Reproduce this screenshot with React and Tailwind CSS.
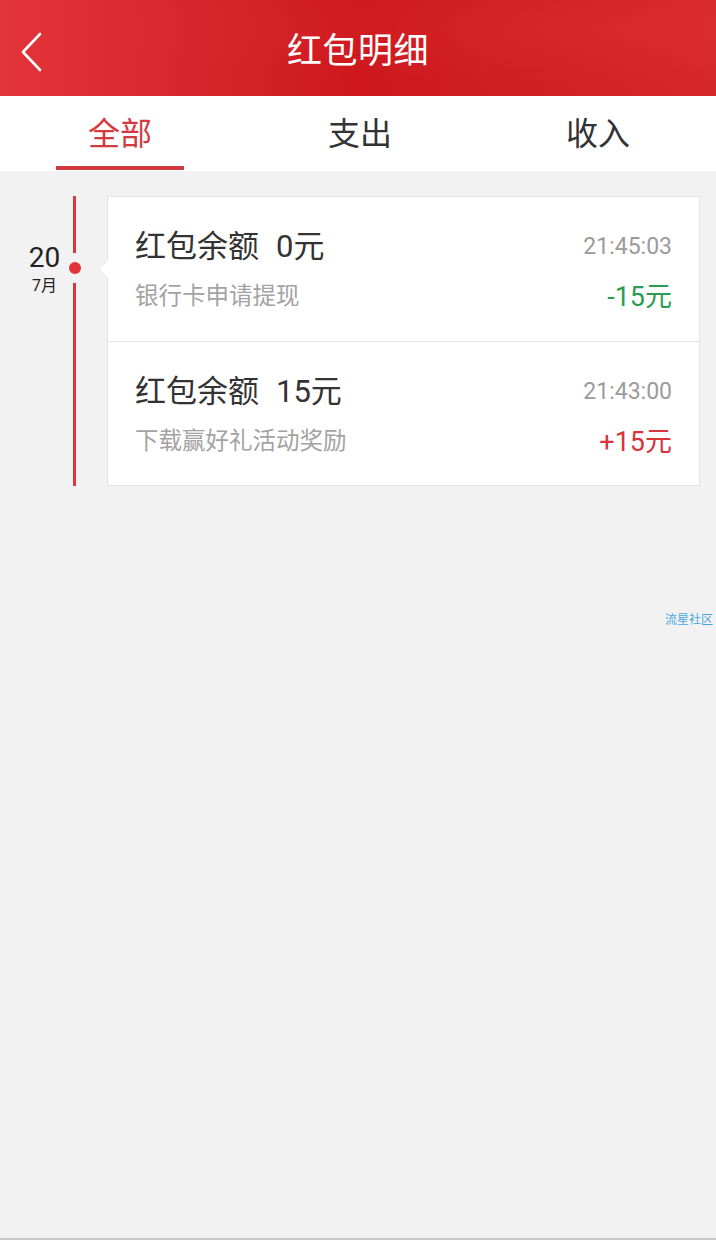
import React from "react";

const font = { fontFamily: "Roboto, 'Noto Sans CJK SC', 'Noto Sans', sans-serif" };

function Row({ balance, time, desc, amount, amountClass, border }) {
  return (
    <div className={`h-[144px] px-[27px] pt-[31px] ${border ? "border-t border-[#e3e3e3]" : ""}`}>
      <div className="flex h-[38px] items-center justify-between">
        <div className="flex items-center text-[31px] text-[#333333]">
          <span>红包余额</span>
          <span className="ml-[17px]">{balance}</span>
        </div>
        <span className="text-[23px] text-[#9b9b9b]">{time}</span>
      </div>
      <div className="mt-[13px] flex h-[36px] items-center justify-between">
        <span className="text-[23.5px] text-[#a3a3a3]">{desc}</span>
        <span className={`text-[27px] ${amountClass}`}>{amount}</span>
      </div>
    </div>
  );
}

export default function App() {
  return (
    <div className="relative flex h-[1240px] w-[716px] flex-col overflow-hidden bg-[#f2f2f2]" style={font}>
      {/* header */}
      <div className="relative flex h-[96px] items-center justify-center bg-gradient-to-r from-[#e3343a] via-[#cd171c] to-[#d6272b] pt-[8px]">
        <div className="absolute inset-0 bg-[radial-gradient(ellipse_at_85%_30%,rgba(255,80,80,0.12),transparent_60%)]" />
        <svg className="absolute left-[19px] top-[31px]" width="26" height="42" viewBox="0 0 26 42" fill="none">
          <path d="M21 3 L4 21 L21 39" stroke="white" strokeWidth="2.6" strokeLinecap="round" strokeLinejoin="round" />
        </svg>
        <span className="relative text-[35px] tracking-[0.5px] text-white">红包明细</span>
      </div>

      {/* tabs */}
      <div className="flex h-[75px] bg-white">
        <div className="relative flex w-[240px] items-center justify-center">
          <span className="text-[32px] text-[#d33a3f]">全部</span>
          <div className="absolute bottom-[1px] left-[56px] h-[4px] w-[128px] bg-[#d03a3f]" />
        </div>
        <div className="flex w-[240px] items-center justify-center">
          <span className="text-[32px] text-[#333333]">支出</span>
        </div>
        <div className="flex w-[236px] items-center justify-center">
          <span className="text-[32px] text-[#333333]">收入</span>
        </div>
      </div>

      {/* timeline */}
      <div className="mt-[25px] flex">
        <div className="relative w-[107px] shrink-0">
          <div className="absolute left-[73px] top-0 h-[57px] w-[3px] bg-[#d9383e]" />
          <div className="absolute left-[73px] top-[87px] bottom-0 w-[3px] bg-[#d9383e]" />
          <div className="absolute left-[69px] top-[66px] h-[12px] w-[12px] rounded-full bg-[#e2333a]" />
          <div className="absolute left-[21px] top-[46px] flex w-[47px] flex-col items-center">
            <span className="text-[28px] leading-[32px] text-[#222222]">20</span>
            <span className="text-[16px] leading-[24px] text-[#222222]">7月</span>
          </div>
        </div>
        <div className="relative w-[593px] border border-[#e3e3e3] bg-white">
          {/* arrow */}
          <div className="absolute left-[-10px] top-[62px] h-0 w-0 border-y-[10px] border-r-[10px] border-y-transparent border-r-[#e3e3e3]" />
          <div className="absolute left-[-9px] top-[62px] h-0 w-0 border-y-[10px] border-r-[10px] border-y-transparent border-r-white" />
          <Row balance="0元" time="21:45:03" desc="银行卡申请提现" amount="-15元" amountClass="text-[#2a9d52]" />
          <Row balance="15元" time="21:43:00" desc="下载赢好礼活动奖励" amount="+15元" amountClass="text-[#d8343a]" border />
        </div>
      </div>

      {/* watermark */}
      <div className="absolute left-[665px] top-[611px] text-[12px] text-[#4aa6e0]">流星社区</div>

      <div className="absolute bottom-0 left-0 h-[2px] w-full bg-[#c9c9c9]" />
    </div>
  );
}
